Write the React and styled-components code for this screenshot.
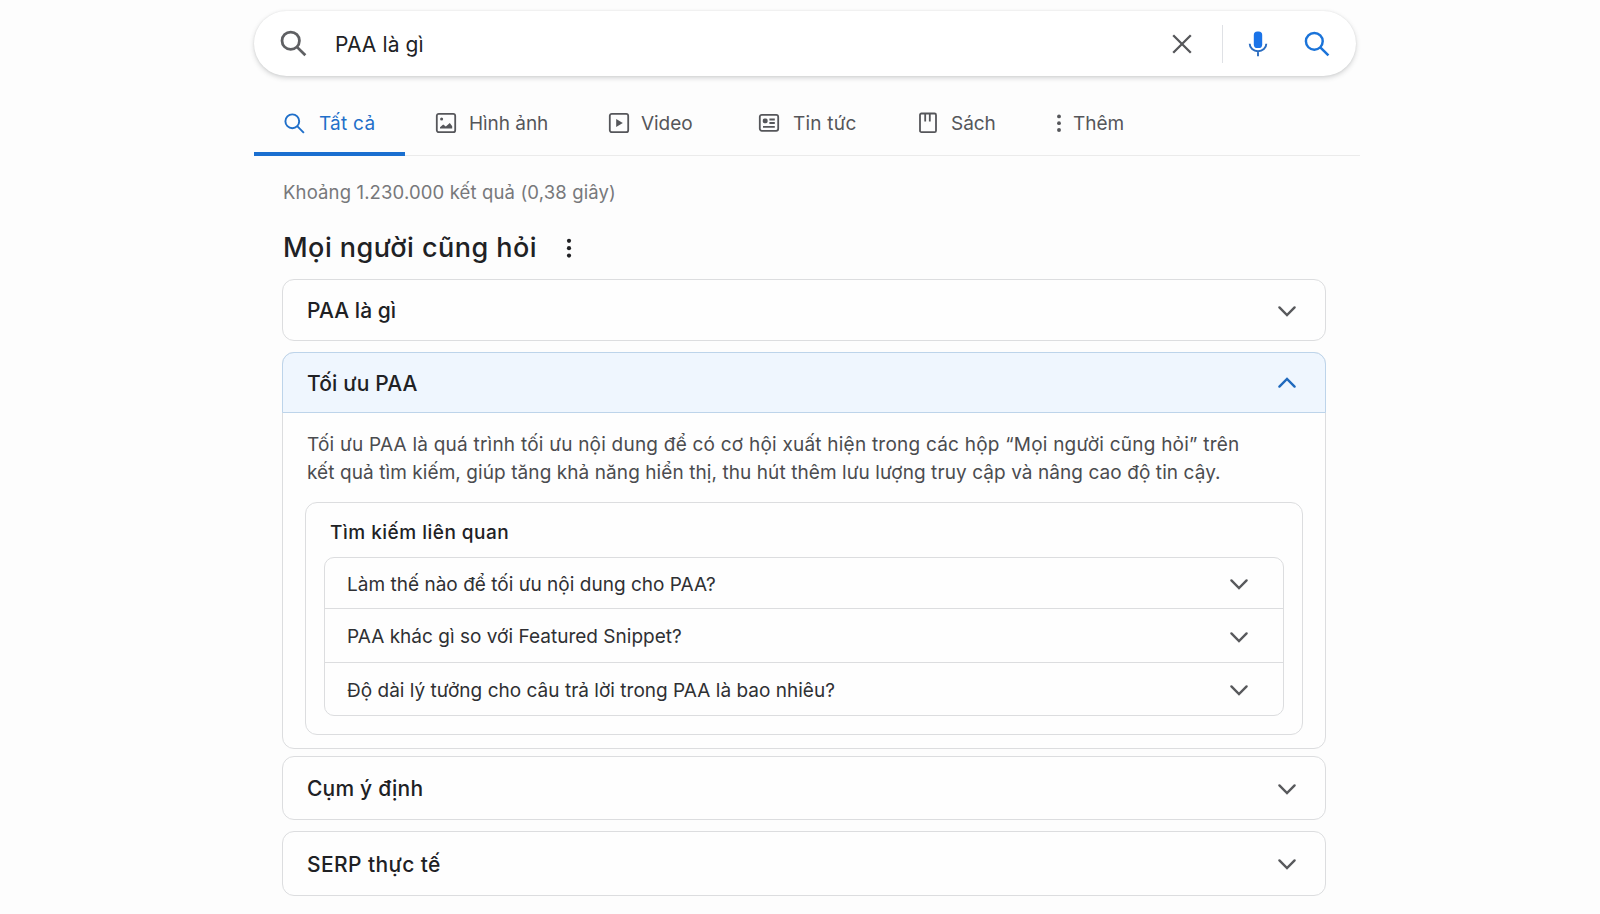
import React, { useState } from "react";
import styled, { createGlobalStyle } from "styled-components";

const TABS = [
  { id: "all", label: "Tất cả", icon: SearchIcon, size: 23, gap: 13, width: 151, start: 29, track: "0.25px" },
  { id: "images", label: "Hình ảnh", icon: ImageIcon, size: 22, gap: 12, width: 172, start: 30 },
  { id: "video", label: "Video", icon: VideoIcon, size: 22, gap: 11, width: 150, start: 31 },
  { id: "news", label: "Tin tức", icon: NewsIcon, size: 22, gap: 13, width: 161, start: 31, track: "0.2px" },
  { id: "books", label: "Sách", icon: BookIcon, size: 22, gap: 12, width: 138, start: 29 },
  { id: "more", label: "Thêm", icon: MoreIcon, size: 22, gap: 3, width: 150, start: 22 },
];

const RELATED = [
  "Làm thế nào để tối ưu nội dung cho PAA?",
  "PAA khác gì so với Featured Snippet?",
  "Độ dài lý tưởng cho câu trả lời trong PAA là bao nhiêu?",
];

function App() {
  const [query, setQuery] = useState("PAA là gì");
  const [activeTab, setActiveTab] = useState("all");
  const [open, setOpen] = useState("toi-uu");

  const toggle = (id) => setOpen(open === id ? null : id);

  return (
    <>
      <GlobalStyle />
      <Page>
        <SearchBar>
          <SearchIcon size={29} color="#5f6063" weight={2.3} />
          <SearchInput value={query} onChange={(e) => setQuery(e.target.value)} />
          <IconButton onClick={() => setQuery("")} aria-label="Xóa">
            <CloseIcon />
          </IconButton>
          <Divider />
          <IconButton aria-label="Giọng nói" $space="25px">
            <MicIcon />
          </IconButton>
          <IconButton aria-label="Tìm kiếm" $space="35px">
            <SearchIcon size={28} color="#1a73d9" weight={2.1} />
          </IconButton>
        </SearchBar>

        <Tabs>
          {TABS.map(({ id, label, icon: Icon, size, gap, width, start, track }) => (
            <Tab
              key={id}
              $active={activeTab === id}
              $gap={gap}
              $width={width}
              $start={start}
              $track={track}
              onClick={() => setActiveTab(id)}
            >
              <Icon size={size} />
              {label}
            </Tab>
          ))}
        </Tabs>

        <Results>
          <Stats>Khoảng 1.230.000 kết quả (0,38 giây)</Stats>
          <Heading>
            <Title>Mọi người cũng hỏi</Title>
            <MoreIcon size={24} />
          </Heading>

          <Card>
            <Question $height={60} onClick={() => toggle("la-gi")}>
              <QuestionText>PAA là gì</QuestionText>
              <Chevron />
            </Question>
          </Card>

          <Card $top={11}>
            <Question
              $height={60}
              $open={open === "toi-uu"}
              onClick={() => toggle("toi-uu")}
            >
              <QuestionText $track="0.15px">Tối ưu PAA</QuestionText>
              <Chevron up={open === "toi-uu"} />
            </Question>
            {open === "toi-uu" && (
              <Answer>
                <AnswerText>
                  <Line $track="0.22px">
                    Tối ưu PAA là quá trình tối ưu nội dung để có cơ hội xuất hiện trong các hộp
                    “Mọi người cũng hỏi” trên
                  </Line>
                  <Line $track="0.08px">
                    kết quả tìm kiếm, giúp tăng khả năng hiển thị, thu hút thêm lưu lượng truy cập
                    và nâng cao độ tin cậy.
                  </Line>
                </AnswerText>
                <RelatedBox>
                  <RelatedTitle>Tìm kiếm liên quan</RelatedTitle>
                  <RelatedList>
                    {RELATED.map((text) => (
                      <RelatedRow key={text}>
                        <RelatedText>{text}</RelatedText>
                        <Chevron />
                      </RelatedRow>
                    ))}
                  </RelatedList>
                </RelatedBox>
              </Answer>
            )}
          </Card>

          <Card $top={7}>
            <Question $height={62} onClick={() => toggle("y-dinh")}>
              <QuestionText $track="0.2px">Cụm ý định</QuestionText>
              <Chevron />
            </Question>
          </Card>

          <Card $top={11}>
            <Question $height={63} onClick={() => toggle("serp")}>
              <QuestionText $track="0.4px">SERP thực tế</QuestionText>
              <Chevron />
            </Question>
          </Card>
        </Results>
      </Page>
    </>
  );
}

function SearchIcon({ size = 24, color = "currentColor", weight = 2 }) {
  return (
    <svg width={size} height={size} viewBox="0 0 24 24" fill="none" stroke={color} strokeWidth={weight}>
      <circle cx="9.7" cy="9.7" r="7.2" />
      <path d="M14.8 14.8 21.8 21.8" />
    </svg>
  );
}

function CloseIcon() {
  return (
    <svg width="20" height="20" viewBox="0 0 20 20" fill="none" stroke="#56575a" strokeWidth="2.3">
      <path d="M1.2 1.2 18.8 18.8M18.8 1.2 1.2 18.8" />
    </svg>
  );
}

function MicIcon() {
  return (
    <svg width="20" height="26" viewBox="0 0 20 26" fill="none">
      <rect x="5.8" y="0.5" width="8.4" height="16.5" rx="3.6" fill="#1a73e8" />
      <path d="M1.7 12.8a8.3 7.4 0 0 0 16.6 0M10 20.2v5" stroke="#2a6cc0" strokeWidth="1.9" />
    </svg>
  );
}

function ImageIcon({ size }) {
  return (
    <svg width={size} height={size} viewBox="0 0 22 22" fill="none">
      <rect x="1.8" y="1.8" width="18.4" height="18.4" rx="2" stroke="currentColor" strokeWidth="1.8" />
      <circle cx="6.6" cy="6.9" r="1.5" fill="currentColor" />
      <path d="M5 16.5v-1.2l3.2-2.7 2.6 1.8 4-3.3 2.4 3.2v2.2z" fill="currentColor" />
    </svg>
  );
}

function VideoIcon({ size }) {
  return (
    <svg width={size} height={size} viewBox="0 0 22 22" fill="none">
      <rect x="1.8" y="1.8" width="18.4" height="18.4" rx="2" stroke="currentColor" strokeWidth="1.8" />
      <path d="M8.2 7v8l6.6-4z" fill="currentColor" />
    </svg>
  );
}

function NewsIcon({ size }) {
  return (
    <svg width={size} height={size} viewBox="0 0 22 22" fill="none" stroke="currentColor" strokeWidth="1.8">
      <rect x="1.8" y="2.8" width="18.4" height="16" rx="2" />
      <rect x="4.8" y="6.4" width="4.8" height="4.8" rx="1.6" fill="currentColor" stroke="none" />
      <path d="M11.4 7.5h5.4M11.4 11h5.4M5 14.8h11.8" />
    </svg>
  );
}

function BookIcon({ size }) {
  return (
    <svg width={size} height={size} viewBox="0 0 22 22" fill="none" stroke="currentColor" strokeWidth="1.8">
      <rect x="3" y="1.5" width="16" height="18.6" rx="1.4" />
      <path d="M8.2 2v7.4M12.8 2v7.4" />
    </svg>
  );
}

function MoreIcon({ size }) {
  return (
    <svg width={size} height={size} viewBox="0 0 24 24" fill="currentColor">
      <circle cx="12" cy="4.8" r="2.1" />
      <circle cx="12" cy="12.2" r="2.1" />
      <circle cx="12" cy="19.6" r="2.1" />
    </svg>
  );
}

function Chevron({ up }) {
  return (
    <svg
      width="20"
      height="12"
      viewBox="0 0 20 12"
      fill="none"
      stroke={up ? "#1f69bd" : "#58595c"}
      strokeWidth="2.4"
      strokeLinecap="round"
    >
      <path d={up ? "M2.4 9.6 10 2 17.6 9.6" : "M2.4 2.4 10 10 17.6 2.4"} />
    </svg>
  );
}

const GlobalStyle = createGlobalStyle`
  * {
    box-sizing: border-box;
  }

  body {
    margin: 0;
    background: #fdfdfd;
    color: #202124;
    font-family: Inter, Roboto, "Liberation Sans", sans-serif;
  }

  button, input {
    font: inherit;
    color: inherit;
    border: 0;
    padding: 0;
    background: none;
    outline: none;
  }

  svg {
    display: block;
    flex-shrink: 0;
  }
`;

const Page = styled.main`
  width: 1106px;
  height: 914px;
  margin-left: 254px;
  padding-top: 11px;
`;

const SearchBar = styled.div`
  display: flex;
  align-items: center;
  width: 1102px;
  height: 65px;
  margin-bottom: 1px;
  padding: 0 25px;
  border-radius: 33px;
  background: #fff;
  box-shadow: 0 2px 5px rgba(60, 64, 67, 0.22), 0 0 2px rgba(60, 64, 67, 0.1);
`;

const SearchInput = styled.input`
  flex: 1;
  min-width: 0;
  margin-left: 27px;
  padding-top: 1px;
  font-size: 21px;
  letter-spacing: 0.1px;
`;

const IconButton = styled.button`
  display: flex;
  margin-left: ${({ $space }) => $space || "0"};
  cursor: pointer;
`;

const Divider = styled.span`
  width: 1px;
  height: 38px;
  margin-left: 30px;
  background: #dfe1e5;
`;

const Tabs = styled.nav`
  display: flex;
  height: 79px;
  border-bottom: 1px solid #ebebeb;
`;

const Tab = styled.button`
  display: flex;
  align-items: center;
  gap: ${({ $gap }) => $gap}px;
  width: ${({ $width }) => $width}px;
  height: 79px;
  padding: 17px 0 0 ${({ $start }) => $start}px;
  border-bottom: 4px solid ${({ $active }) => ($active ? "#1a6fd0" : "transparent")};
  color: ${({ $active }) => ($active ? "#1f6fc9" : "#55565a")};
  font-size: 19px;
  letter-spacing: ${({ $track }) => $track || "-0.05px"};
  white-space: nowrap;
  cursor: pointer;
`;

const Results = styled.section`
  width: 1044px;
  margin-left: 28px;
`;

const Stats = styled.p`
  margin: 0;
  padding: 24px 0 0 1px;
  color: #77787b;
  font-size: 18.5px;
  line-height: 24px;
  letter-spacing: 0.14px;
`;

const Heading = styled.div`
  display: flex;
  align-items: center;
  gap: 20px;
  height: 75px;
  padding: 12px 0 0 1px;
`;

const Title = styled.h2`
  margin: 0;
  font-size: 27px;
  font-weight: 500;
  letter-spacing: 0.48px;
`;

const Card = styled.article`
  margin-top: ${({ $top }) => $top || 0}px;
  border: 1px solid #dcdddf;
  border-radius: 12px;
  background: #fefefe;
`;

const Question = styled.button`
  display: flex;
  align-items: center;
  justify-content: space-between;
  width: 100%;
  height: ${({ $height }) => $height}px;
  padding: 1px 28px 0 24px;
  cursor: pointer;

  ${({ $open }) =>
    $open &&
    `
    width: calc(100% + 2px);
    height: 61px;
    margin: -1px -1px 0;
    border: 1px solid #bdd4ea;
    border-radius: 12px 12px 0 0;
    background: #eff6fe;
  `}
`;

const QuestionText = styled.span`
  font-size: 21px;
  font-weight: 500;
  letter-spacing: ${({ $track }) => $track || "0.06px"};
`;

const Answer = styled.div`
  padding: 18px 22px 13px;
`;

const AnswerText = styled.div`
  padding-left: 2px;
  color: #4b4c4f;
  font-size: 19px;
  line-height: 28px;
`;

const Line = styled.div`
  letter-spacing: ${({ $track }) => $track};
  white-space: nowrap;
`;

const RelatedBox = styled.div`
  margin-top: 15px;
  height: 233px;
  padding: 16px 18px 0;
  border: 1px solid #dcdddf;
  border-radius: 12px;
`;

const RelatedTitle = styled.h3`
  margin: 0 0 11px 6px;
  font-size: 19px;
  font-weight: 500;
  line-height: 27px;
  letter-spacing: 0.5px;
`;

const RelatedList = styled.div`
  border: 1px solid #dcdddf;
  border-radius: 10px;
`;

const RelatedRow = styled.div`
  display: flex;
  align-items: center;
  justify-content: space-between;
  height: 50px;
  padding: 2px 34px 0 22px;

  & + & {
    height: 54px;
    border-top: 1px solid #dcdddf;
  }

  & + &:last-child {
    height: 53px;
  }
`;

const RelatedText = styled.span`
  color: #2f3033;
  font-size: 19px;
  letter-spacing: 0.02px;
  white-space: nowrap;
`;

export default App;
